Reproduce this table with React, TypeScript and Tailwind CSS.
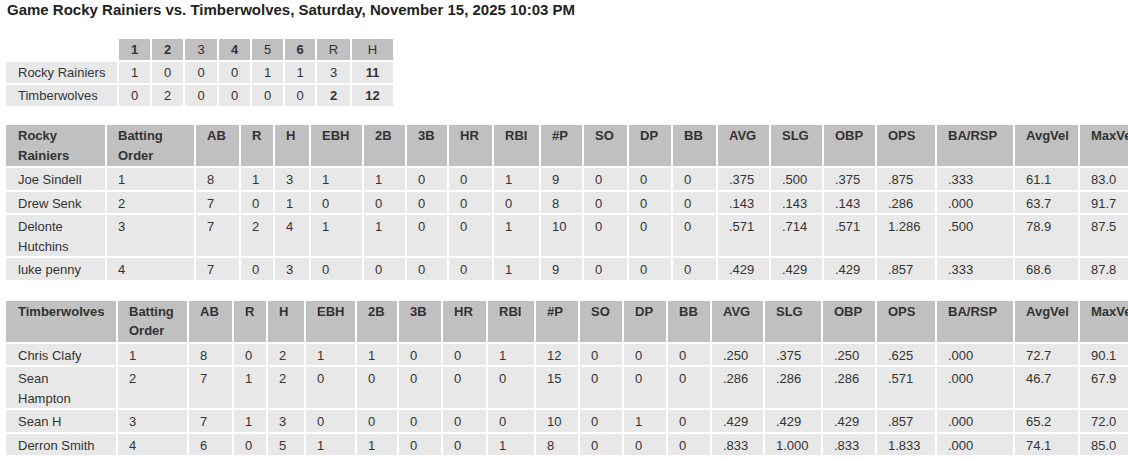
import React from 'react';

type Row = { name: string; vals: string[] };

const statCols = ['Batting Order', 'AB', 'R', 'H', 'EBH', '2B', '3B', 'HR', 'RBI', '#P', 'SO', 'DP', 'BB', 'AVG', 'SLG', 'OBP', 'OPS', 'BA/RSP', 'AvgVel', 'MaxVel'];

const rainiers: Row[] = [
  { name: 'Joe Sindell', vals: ['1', '8', '1', '3', '1', '1', '0', '0', '1', '9', '0', '0', '0', '.375', '.500', '.375', '.875', '.333', '61.1', '83.0'] },
  { name: 'Drew Senk', vals: ['2', '7', '0', '1', '0', '0', '0', '0', '0', '8', '0', '0', '0', '.143', '.143', '.143', '.286', '.000', '63.7', '91.7'] },
  { name: 'Delonte Hutchins', vals: ['3', '7', '2', '4', '1', '1', '0', '0', '1', '10', '0', '0', '0', '.571', '.714', '.571', '1.286', '.500', '78.9', '87.5'] },
  { name: 'luke penny', vals: ['4', '7', '0', '3', '0', '0', '0', '0', '1', '9', '0', '0', '0', '.429', '.429', '.429', '.857', '.333', '68.6', '87.8'] },
];

const wolves: Row[] = [
  { name: 'Chris Clafy', vals: ['1', '8', '0', '2', '1', '1', '0', '0', '1', '12', '0', '0', '0', '.250', '.375', '.250', '.625', '.000', '72.7', '90.1'] },
  { name: 'Sean Hampton', vals: ['2', '7', '1', '2', '0', '0', '0', '0', '0', '15', '0', '0', '0', '.286', '.286', '.286', '.571', '.000', '46.7', '67.9'] },
  { name: 'Sean H', vals: ['3', '7', '1', '3', '0', '0', '0', '0', '0', '10', '0', '1', '0', '.429', '.429', '.429', '.857', '.000', '65.2', '72.0'] },
  { name: 'Derron Smith', vals: ['4', '6', '0', '5', '1', '1', '0', '0', '1', '8', '0', '0', '0', '.833', '1.000', '.833', '1.833', '.000', '74.1', '85.0'] },
];

// column widths in px, first is the team/name column
const widths1 = [99, 87, 43, 32, 34, 51, 41, 40, 43, 45, 41, 43, 42, 43, 51, 51, 51, 58, 76, 63, 65];
const widths2 = [110, 69, 43, 32, 36, 49, 40, 42, 43, 46, 42, 42, 42, 42, 51, 56, 52, 58, 76, 63, 65];

const innings = [
  { label: '1', bold: true },
  { label: '2', bold: true },
  { label: '3', bold: false },
  { label: '4', bold: true },
  { label: '5', bold: false },
  { label: '6', bold: true },
  { label: 'R', bold: false },
  { label: 'H', bold: false },
];
const lineWidths = [31, 31, 32, 31, 31, 30, 33, 41];

const lineRows = [
  { team: 'Rocky Rainiers', vals: ['1', '0', '0', '0', '1', '1', '3', '11'], bold: [false, false, false, false, false, false, false, true] },
  { team: 'Timberwolves', vals: ['0', '2', '0', '0', '0', '0', '2', '12'], bold: [false, false, false, false, false, false, true, true] },
];

function BoxTable({ team, rows, widths }: { team: string; rows: Row[]; widths: number[] }) {
  const total = widths.reduce((a, b) => a + b, 0) + (widths.length + 1) * 2;
  return (
    <table className="table-fixed border-separate border-spacing-[2px] shrink-0" style={{ width: total }}>
      <thead>
        <tr>
          {[team, ...statCols].map((h, i) => (
            <th
              key={h}
              className={`bg-[#c0c0c0] text-left align-top font-bold text-[#333] py-[1px] leading-[19.5px] ${i === 0 ? 'pl-[12px] pr-[12px]' : 'pl-[11px] pr-1'}`}
              style={{ width: widths[i] }}
            >
              {h}
            </th>
          ))}
        </tr>
      </thead>
      <tbody>
        {rows.map((r) => (
          <tr key={r.name}>
            <td className="bg-[#e8e8e8] align-top pl-[12px] pr-[12px] pt-[2px] pb-0 leading-[19.5px]">{r.name}</td>
            {r.vals.map((v, i) => (
              <td key={i} className="bg-[#e8e8e8] align-top pl-[11px] pr-1 pt-[2px] pb-0 leading-[19.5px]">
                {v}
              </td>
            ))}
          </tr>
        ))}
      </tbody>
    </table>
  );
}

export default function App() {
  return (
    <div className="w-[1128px] h-[459px] overflow-hidden bg-white text-[13px] text-[#333] font-['Liberation_Sans',Arial,sans-serif]">
      <div className="pl-[4px] pt-[1px]">
        <h1 className="pl-[3px] text-[15px] font-bold leading-[17px] text-[#222]">
          Game Rocky Rainiers vs. Timberwolves, Saturday, November 15, 2025 10:03 PM
        </h1>

        <table className="mt-[19px] table-fixed border-separate border-spacing-[2px] w-[391px]">
          <thead>
            <tr>
              <th className="w-[111px]"></th>
              {innings.map((c, i) => (
                <th
                  key={c.label}
                  className={`bg-[#c0c0c0] text-center py-[1px] leading-[19px] ${c.bold ? 'font-bold' : 'font-normal'}`}
                  style={{ width: lineWidths[i] }}
                >
                  {c.label}
                </th>
              ))}
            </tr>
          </thead>
          <tbody>
            {lineRows.map((r) => (
              <tr key={r.team}>
                <td className="bg-[#e8e8e8] pl-[12px] py-[1px] leading-[19px]">{r.team}</td>
                {r.vals.map((v, i) => (
                  <td key={i} className={`bg-[#e8e8e8] text-center py-[1px] leading-[19px] ${r.bold[i] ? 'font-bold' : ''}`}>
                    {v}
                  </td>
                ))}
              </tr>
            ))}
          </tbody>
        </table>

        <div className="mt-[15px] flex flex-col gap-[17px]">
          <BoxTable team="Rocky Rainiers" rows={rainiers} widths={widths1} />
          <BoxTable team="Timberwolves" rows={wolves} widths={widths2} />
        </div>
      </div>
    </div>
  );
}
